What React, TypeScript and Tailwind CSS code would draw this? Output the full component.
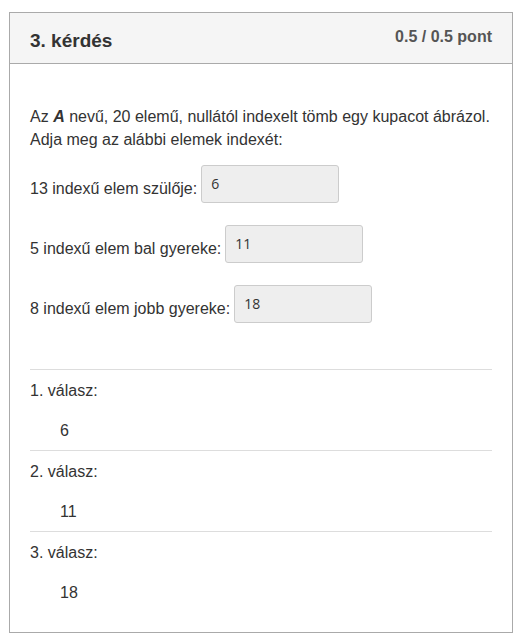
import React from 'react'

const rows = [
  { label: '13 indexű elem szülője:', value: '6' },
  { label: '5 indexű elem bal gyereke:', value: '11' },
  { label: '8 indexű elem jobb gyereke:', value: '18' },
]

const answers = [
  { label: '1. válasz:', value: '6' },
  { label: '2. válasz:', value: '11' },
  { label: '3. válasz:', value: '18' },
]

export default function App() {
  return (
    <div className="min-h-[637px] bg-white pt-[12px] pl-[9px] font-['Liberation_Sans',Arial,sans-serif] text-[#333]">
      <div className="w-[504px] h-[621px] border border-[#aaa] flex flex-col">
        <div className="h-[51px] bg-[#f5f5f5] border-b border-[#aaa] px-[20px] flex justify-between items-start">
          <h3 className="pt-[17px] text-[19px] leading-[22px] font-bold text-[#333]">3. kérdés</h3>
          <span className="pt-[14px] text-[16px] leading-[20px] font-bold text-[#555]">0.5 / 0.5 pont</span>
        </div>

        <div className="px-[20px] pt-[41px] text-[16px] leading-[23px]">
          <p>
            Az <b><i>A</i></b> nevű, 20 elemű, nullától indexelt tömb egy kupacot ábrázol.
            <br />
            Adja meg az alábbi elemek indexét:
          </p>

          <div className="mt-[14px] flex flex-col gap-[22px]">
            {rows.map((row) => (
              <div key={row.label} className="flex items-end gap-[4px]">
                <span className="mb-[3px]">{row.label}</span>
                <div className="w-[138px] h-[38px] rounded-[3px] border border-[#ccc] bg-[#eee] px-[9px] flex items-center text-[14px] leading-[16px] font-['Open_Sans',sans-serif] text-[#333]">
                  {row.value}
                </div>
              </div>
            ))}
          </div>

          <div className="mt-[46px]">
            {answers.map((a) => (
              <div key={a.label} className="border-t border-[#ddd] pt-[9px] pb-[8px]">
                <div>{a.label}</div>
                <div className="mt-[17px] pl-[30px]">{a.value}</div>
              </div>
            ))}
          </div>
        </div>
      </div>
    </div>
  )
}
